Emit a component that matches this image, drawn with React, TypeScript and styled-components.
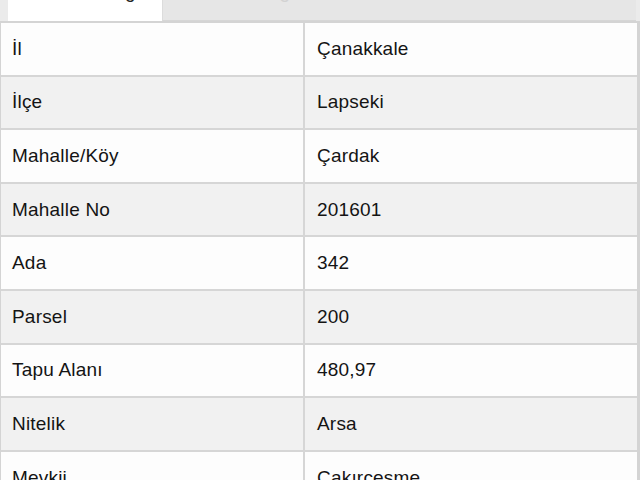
import React from "react";
import styled, { createGlobalStyle } from "styled-components";

const Global = createGlobalStyle`
  html, body { margin: 0; padding: 0; background: #ffffff; }
  body { font-family: "Liberation Sans", Arial, sans-serif; overflow: hidden; }
`;

const Page = styled.div`
  width: 640px;
  height: 480px;
  overflow: hidden;
  display: flex;
  flex-direction: column;
`;

const TabBar = styled.div`
  display: flex;
  height: 21px;
  background: #ebebeb;
  padding-left: 8px;
  padding-right: 4px;
  box-sizing: border-box;
  flex-shrink: 0;
`;

const Tab = styled.div<{ $active?: boolean }>`
  flex: ${(p) => (p.$active ? "0 0 154px" : "1 1 auto")};
  background: ${(p) => (p.$active ? "#ffffff" : "#e6e6e6")};
  border-bottom: ${(p) => (p.$active ? "none" : "1px solid #d6d6d6")};
  border-left: ${(p) => (p.$active ? "none" : "1px solid #dcdcdc")};
  position: relative;
  overflow: hidden;
  font-size: 19px;
  color: ${(p) => (p.$active ? "#222" : "#d2d2d2")};
`;

const TabLabel = styled.span<{ $left: number }>`
  position: absolute;
  left: ${(p) => p.$left}px;
  top: -19px;
  white-space: nowrap;
`;

const Table = styled.div`
  display: grid;
  grid-template-columns: 302px 1fr;
  border-left: 1px solid #d4d4d4;
  border-right: 3px solid #d4d4d4;
  border-top: 2px solid #d4d4d4;
`;

const Cell = styled.div<{ $alt: boolean; $right?: boolean }>`
  height: 51.6px;
  display: flex;
  align-items: center;
  padding-left: ${(p) => (p.$right ? "12px" : "11px")};
  background: ${(p) => (p.$alt ? "#f1f1f1" : "#fdfdfd")};
  border-bottom: 2px solid #d6d6d6;
  border-left: ${(p) => (p.$right ? "2px solid #d6d6d6" : "none")};
  font-size: 19px;
  letter-spacing: 0.2px;
  color: #141414;
`;

const rows: [string, string][] = [
  ["İl", "Çanakkale"],
  ["İlçe", "Lapseki"],
  ["Mahalle/Köy", "Çardak"],
  ["Mahalle No", "201601"],
  ["Ada", "342"],
  ["Parsel", "200"],
  ["Tapu Alanı", "480,97"],
  ["Nitelik", "Arsa"],
  ["Mevkii", "Çakırçeşme"],
];

export default function App() {
  return (
    <Page>
      <Global />
      <TabBar>
        <Tab $active>
          <TabLabel $left={40}>Genel Bilgiler</TabLabel>
        </Tab>
        <Tab>
          <TabLabel $left={30}>Konum Bilgileri</TabLabel>
        </Tab>
      </TabBar>
      <Table>
        {rows.map(([k, v], i) => (
          <React.Fragment key={k}>
            <Cell $alt={i % 2 === 1}>{k}</Cell>
            <Cell $alt={i % 2 === 1} $right>
              {v}
            </Cell>
          </React.Fragment>
        ))}
      </Table>
    </Page>
  );
}
